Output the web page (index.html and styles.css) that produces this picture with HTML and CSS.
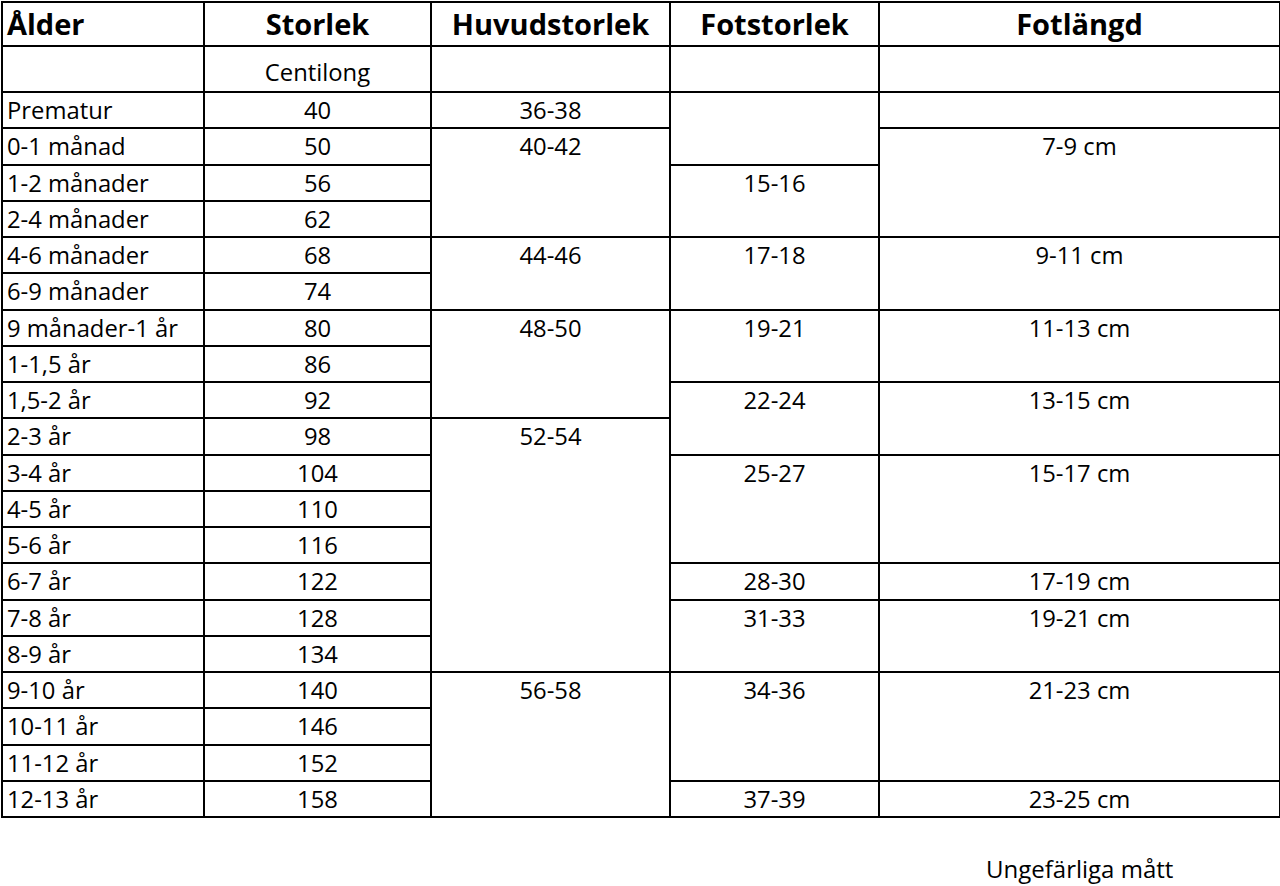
FILE: index.html
```html
<!DOCTYPE html>
<html lang="sv">
<head>
<meta charset="utf-8">
<title>Storlekstabell</title>
<link rel="stylesheet" href="styles.css">
</head>
<body>
<table class="sizes">
  <colgroup>
    <col class="c1"><col class="c2"><col class="c3"><col class="c4"><col class="c5">
  </colgroup>
  <tr class="head">
    <th class="left">Ålder</th>
    <th>Storlek</th>
    <th>Huvudstorlek</th>
    <th>Fotstorlek</th>
    <th>Fotlängd</th>
  </tr>
  <tr class="sub">
    <td class="left"></td>
    <td>Centilong</td>
    <td></td>
    <td></td>
    <td></td>
  </tr>
  <tr>
    <td class="left">Prematur</td>
    <td>40</td>
    <td>36-38</td>
    <td rowspan="2"></td>
    <td></td>
  </tr>
  <tr>
    <td class="left">0-1 månad</td>
    <td>50</td>
    <td rowspan="3">40-42</td>
    <td rowspan="3">7-9 cm</td>
  </tr>
  <tr>
    <td class="left">1-2 månader</td>
    <td>56</td>
    <td rowspan="2">15-16</td>
  </tr>
  <tr>
    <td class="left">2-4 månader</td>
    <td>62</td>
  </tr>
  <tr>
    <td class="left">4-6 månader</td>
    <td>68</td>
    <td rowspan="2">44-46</td>
    <td rowspan="2">17-18</td>
    <td rowspan="2">9-11 cm</td>
  </tr>
  <tr>
    <td class="left">6-9 månader</td>
    <td>74</td>
  </tr>
  <tr>
    <td class="left">9 månader-1 år</td>
    <td>80</td>
    <td rowspan="3">48-50</td>
    <td rowspan="2">19-21</td>
    <td rowspan="2">11-13 cm</td>
  </tr>
  <tr>
    <td class="left">1-1,5 år</td>
    <td>86</td>
  </tr>
  <tr>
    <td class="left">1,5-2 år</td>
    <td>92</td>
    <td rowspan="2">22-24</td>
    <td rowspan="2">13-15 cm</td>
  </tr>
  <tr>
    <td class="left">2-3 år</td>
    <td>98</td>
    <td rowspan="7">52-54</td>
  </tr>
  <tr>
    <td class="left">3-4 år</td>
    <td>104</td>
    <td rowspan="3">25-27</td>
    <td rowspan="3">15-17 cm</td>
  </tr>
  <tr>
    <td class="left">4-5 år</td>
    <td>110</td>
  </tr>
  <tr>
    <td class="left">5-6 år</td>
    <td>116</td>
  </tr>
  <tr>
    <td class="left">6-7 år</td>
    <td>122</td>
    <td>28-30</td>
    <td>17-19 cm</td>
  </tr>
  <tr>
    <td class="left">7-8 år</td>
    <td>128</td>
    <td rowspan="2">31-33</td>
    <td rowspan="2">19-21 cm</td>
  </tr>
  <tr>
    <td class="left">8-9 år</td>
    <td>134</td>
  </tr>
  <tr>
    <td class="left">9-10 år</td>
    <td>140</td>
    <td rowspan="4">56-58</td>
    <td rowspan="3">34-36</td>
    <td rowspan="3">21-23 cm</td>
  </tr>
  <tr>
    <td class="left">10-11 år</td>
    <td>146</td>
  </tr>
  <tr>
    <td class="left">11-12 år</td>
    <td>152</td>
  </tr>
  <tr>
    <td class="left">12-13 år</td>
    <td>158</td>
    <td>37-39</td>
    <td>23-25 cm</td>
  </tr>
</table>
<p class="note">Ungefärliga mått</p>
</body>
</html>
```

FILE: styles.css
```css
html, body {
  margin: 0;
  padding: 0;
  background: #fff;
}

body {
  font-family: "Open Sans", "Liberation Sans", sans-serif;
  color: #000;
  width: 1280px;
  height: 886px;
  overflow: hidden;
}

.sizes {
  border-collapse: collapse;
  table-layout: fixed;
  width: 1278px;
  margin: 1px 0 0 1px;
}

.c1 { width: 202px; }
.c2 { width: 227px; }
.c3 { width: 239px; }
.c4 { width: 209px; }
.c5 { width: 401px; }

.sizes th,
.sizes td {
  border: 2px solid #000;
  padding: 0;
  text-align: center;
  vertical-align: top;
  white-space: nowrap;
}

.sizes td {
  font-size: 23.8px;
  line-height: 34px;
  font-weight: 400;
}

.sizes tr {
  height: 36.25px;
}

.sizes tr.head {
  height: 44px;
}

.sizes th {
  font-size: 29px;
  line-height: 42px;
  font-weight: 700;
  vertical-align: middle;
}

.sizes tr.sub {
  height: 46px;
}

.sizes tr.sub td {
  padding-top: 8px;
}

.sizes .left {
  text-align: left;
  padding-left: 4px;
}

.note {
  margin: 36px 0 0 0;
  padding-left: 986px;
  font-size: 24px;
  line-height: 30px;
}
```
